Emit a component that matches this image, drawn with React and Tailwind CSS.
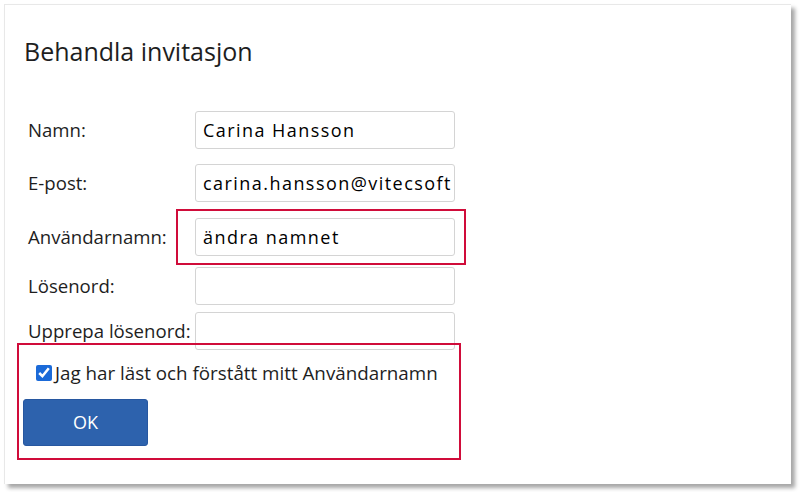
import React, { useState } from 'react';

const fields = [
  { label: 'Namn:', value: 'Carina Hansson', gap: 'mt-[44px]' },
  { label: 'E-post:', value: 'carina.hansson@vitecsoft', gap: 'mt-[15px]' },
  { label: 'Användarnamn:', value: 'ändra namnet', gap: 'mt-[16px]', marked: true },
  { label: 'Lösenord:', value: '', gap: 'mt-[11px]', type: 'password' },
  { label: 'Upprepa lösenord:', value: '', gap: 'mt-[7px]', type: 'password' },
];

const App = () => {
  const [values, setValues] = useState(fields.map((f) => f.value));
  const [accepted, setAccepted] = useState(true);

  const handleChange = (i, v) => {
    const next = [...values];
    next[i] = v;
    setValues(next);
  };

  return (
    <div className="w-[800px] h-[492px] bg-white pt-[4px] pl-[4px] font-['Open_Sans',sans-serif] text-[#1e1e1e]">
      <div className="relative w-[787px] h-[480px] bg-white border-t border-l border-[#e8e8e8] shadow-[4px_4px_4px_rgba(0,0,0,0.35)]">
        <h1 className="pl-[19px] pt-[30px] text-[25px] leading-[32px] font-normal">
          Behandla invitasjon
        </h1>

        <form onSubmit={(e) => e.preventDefault()}>
          {fields.map((f, i) => (
            <div key={f.label} className={`relative flex items-center ${f.gap}`}>
              <label className="w-[190px] shrink-0 pl-[23px] text-[18.6px] leading-[24px] whitespace-nowrap">
                {f.label}
              </label>
              <input
                type={f.type || 'text'}
                value={values[i]}
                onChange={(e) => handleChange(i, e.target.value)}
                className="w-[260px] h-[38px] pl-[7px] pr-[1px] border border-[#d4d4d4] rounded-[3px] text-[18px] tracking-[1.45px] text-black outline-none"
              />
              {f.marked && (
                <div className="absolute left-[171px] top-[-9px] w-[290px] h-[56px] border-2 border-[#d00c3a] pointer-events-none" />
              )}
            </div>
          ))}

          <div className="relative mt-[11px] pl-[31px]">
            <label className="flex items-center gap-[3px] text-[18.8px] leading-[24px]">
              <input
                type="checkbox"
                checked={accepted}
                onChange={(e) => setAccepted(e.target.checked)}
                className="w-4 h-4 m-0 accent-[#1b6ad8]"
              />
              Jag har läst och förstått mitt Användarnamn
            </label>
            <div className="absolute left-[12px] top-[-18px] w-[444px] h-[117px] border-2 border-[#d00c3a] pointer-events-none" />
          </div>

          <button
            type="submit"
            className="ml-[18px] mt-[14px] w-[125px] h-[47px] bg-[#2d62ad] border border-[#2757a0] rounded-[3px] text-white text-[18px] font-medium"
          >
            OK
          </button>
        </form>
      </div>
    </div>
  );
};

export default App;
